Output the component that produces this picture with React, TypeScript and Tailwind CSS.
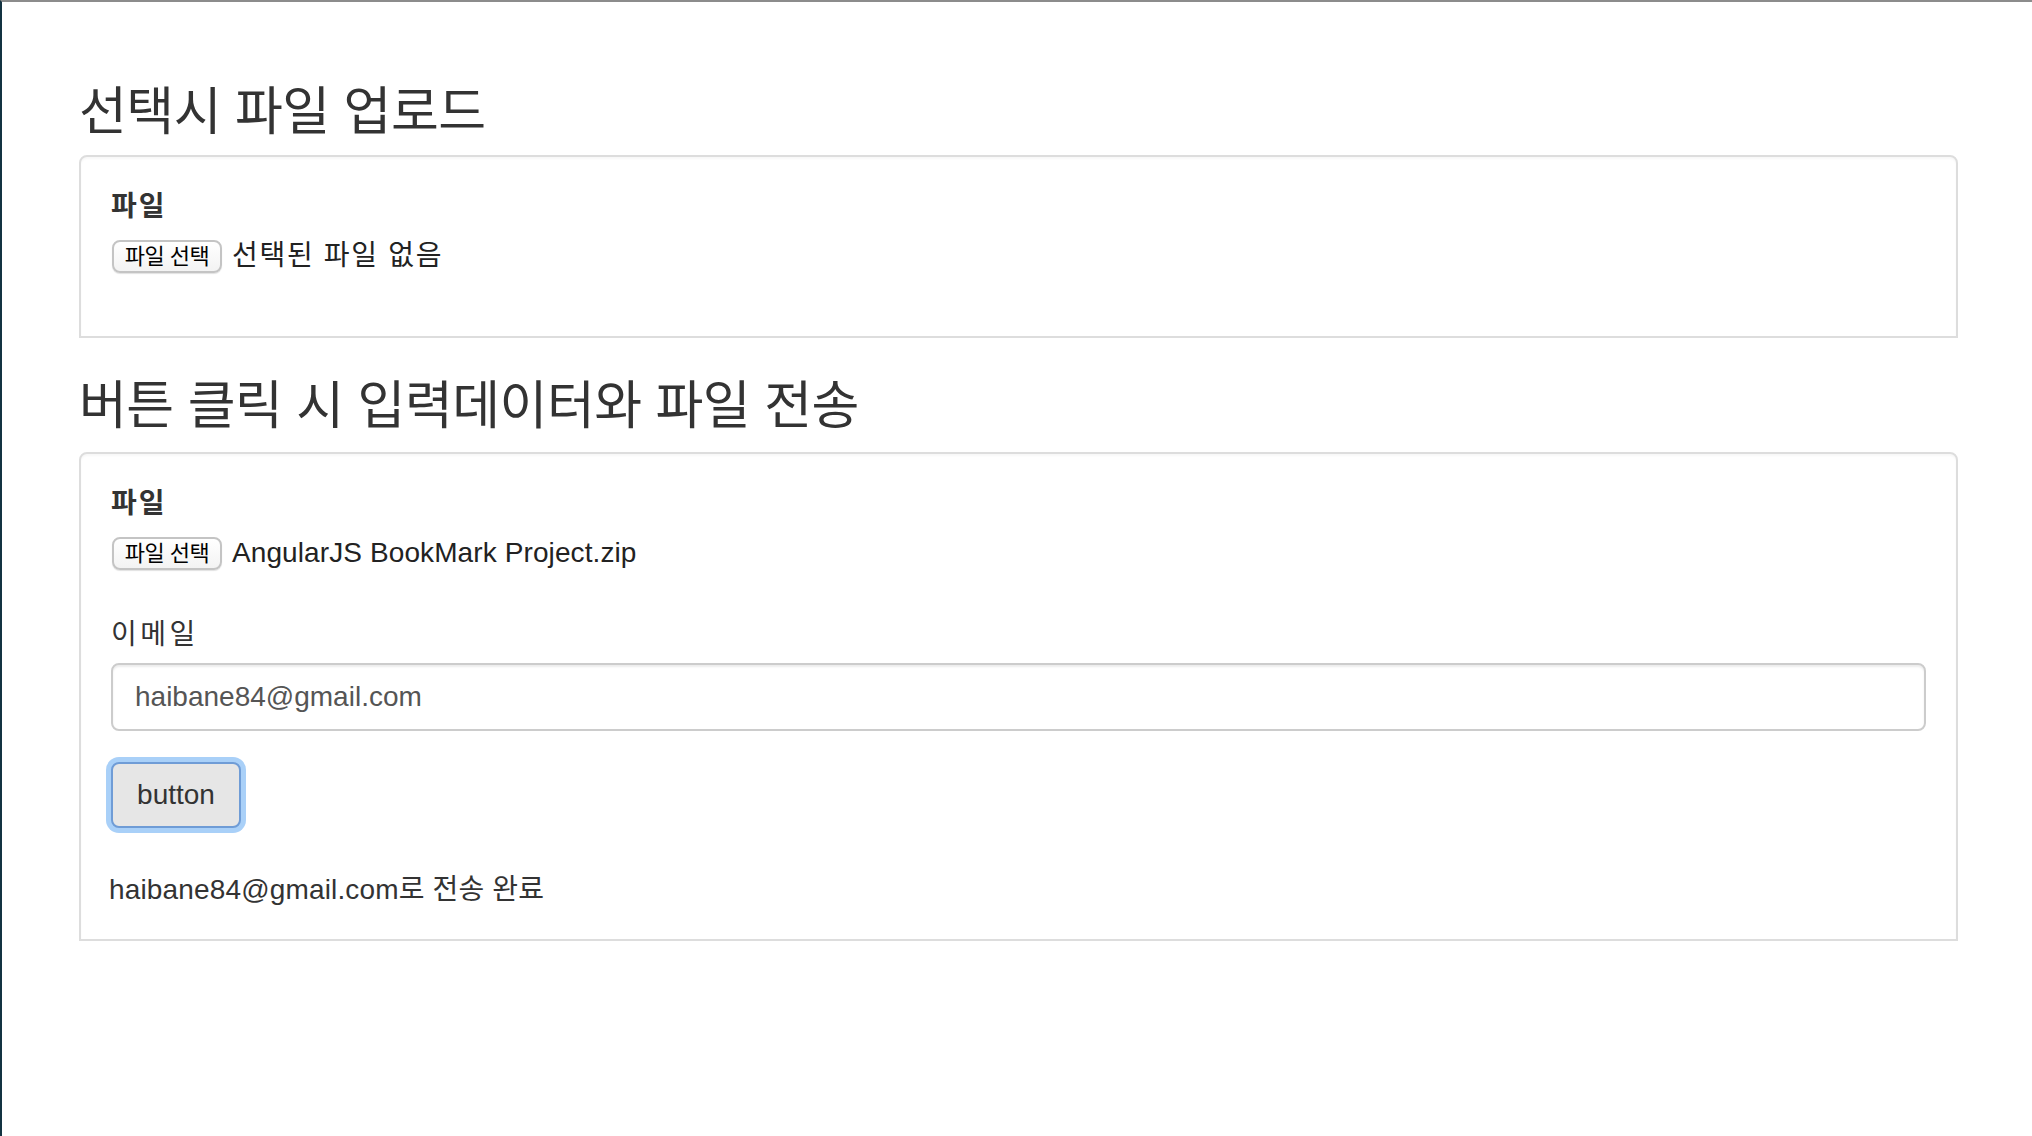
import React from 'react';

const FONT = { fontFamily: '"Liberation Sans", "Noto Sans CJK KR", sans-serif' };

function FileInput({ fileName, tracking }: { fileName: string; tracking: string }) {
  return (
    <div className="flex h-[38px] items-center">
      <span className="ml-px flex h-[33px] w-[110px] items-center justify-center rounded-[8px] border-2 border-[#c4c4c4] bg-gradient-to-b from-white to-[#f3f3f3] text-[22px] tracking-[-0.5px] text-black shadow-[0_1px_1px_rgba(0,0,0,0.12)]">
        파일 선택
      </span>
      <span className={`ml-[10px] text-[28px] leading-[38px] text-[#222] ${tracking}`}>{fileName}</span>
    </div>
  );
}

export default function App() {
  return (
    <div style={FONT} className="min-h-screen border-l-2 border-t-2 border-l-[#133341] border-t-[#8c8c8c] bg-white text-[#333]">
      <div className="ml-[77px] w-[1879px]">
        <h2 className="mt-[82px] h-[56px] text-[52px] font-normal leading-[56px] tracking-[-0.5px]">선택시 파일 업로드</h2>

        {/* Select & upload */}
        <div className="mt-[15px] rounded-t-[8px] border-2 border-[#dddddd] bg-white px-[30px] pt-[30px] pb-[31px] shadow-[inset_0_2px_2px_rgba(0,0,0,0.03)]">
          <label className="mb-[10px] block text-[28px] font-bold leading-[40px] tracking-[2px]">파일</label>
          <div className="mb-[30px]">
            <FileInput fileName="선택된 파일 없음" tracking="tracking-[1.7px]" />
          </div>
        </div>

        <h2 className="mt-[40px] h-[56px] text-[52px] font-normal leading-[56px] tracking-[-0.5px]">버튼 클릭 시 입력데이터와 파일 전송</h2>

        {/* Upload with data */}
        <div className="mt-[18px] rounded-t-[8px] border-2 border-[#dddddd] bg-white px-[30px] pt-[30px] pb-[29px] shadow-[inset_0_2px_2px_rgba(0,0,0,0.03)]">
          <label className="mb-[10px] block text-[28px] font-bold leading-[40px] tracking-[2px]">파일</label>
          <FileInput fileName="AngularJS BookMark Project.zip" tracking="tracking-[0.1px]" />

          <label className="mt-[43px] mb-[8px] block text-[28px] leading-[40px] tracking-[3.5px]">이메일</label>
          <input
            readOnly
            value="haibane84@gmail.com"
            className="block h-[68px] w-full rounded-[8px] border-2 border-[#cccccc] px-[22px] text-[28px] text-[#555] shadow-[inset_0_2px_2px_rgba(0,0,0,0.075)] outline-none"
          />

          <button className="mt-[31px] block h-[66px] w-[130px] rounded-[8px] border-2 border-[#6f9cd6] bg-[#e6e6e6] text-[28px] text-[#333] shadow-[0_0_0_5px_#a9d0f8]">
            button
          </button>

          <p className="mt-[42px] -ml-[2px] text-[28px] leading-[40px] tracking-[0.15px] text-[#333]">haibane84@gmail.com로 전송 완료</p>
        </div>
      </div>
    </div>
  );
}
